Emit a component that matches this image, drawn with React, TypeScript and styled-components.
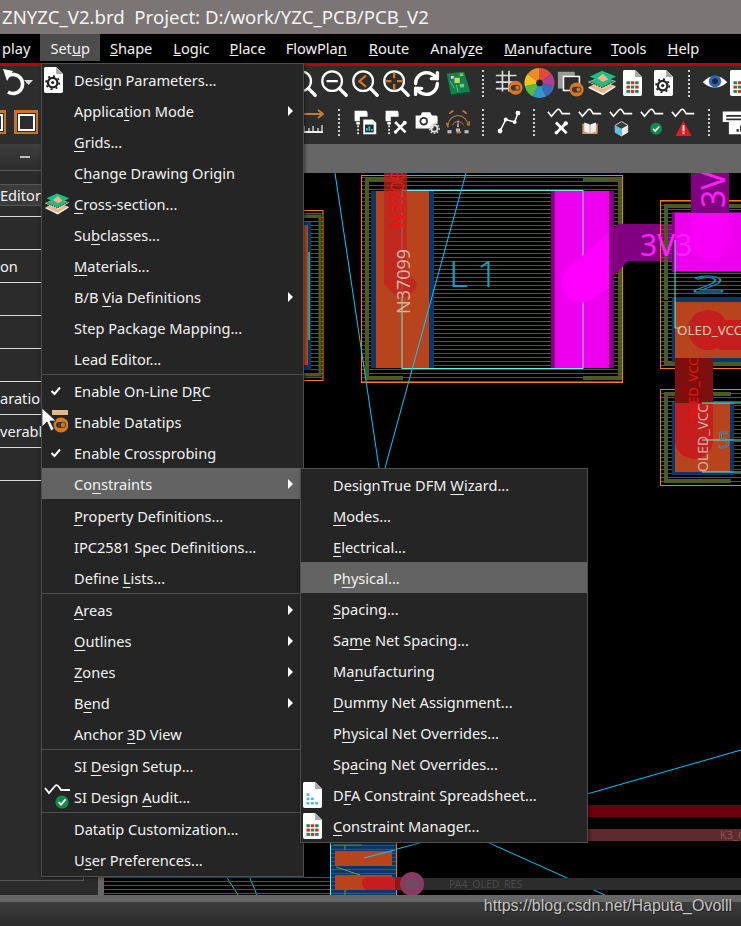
import React from 'react';
import styled, { createGlobalStyle } from 'styled-components';
import { RefreshCw } from 'lucide-react';

const GlobalStyle = createGlobalStyle`
  html, body {
    margin: 0;
    background: #000;
    overflow: hidden;
  }
  * {
    box-sizing: border-box;
  }
`;

const FONT = `"Noto Sans", "Open Sans", "Liberation Sans", sans-serif`;

const Page = styled.div`
  position: relative;
  width: 741px;
  height: 926px;
  display: flex;
  flex-direction: column;
  overflow: hidden;
  font-family: ${FONT};
  color: #f2f2f2;
`;

const TitleBar = styled.div`
  height: 34px;
  flex: none;
  background: #7b7575;
  padding-left: 2px;
  font-size: 18.6px;
  line-height: 34px;
  white-space: pre;
  color: #f4f4f4;
`;

const MenuBar = styled.div`
  height: 32px;
  flex: none;
  background: #000;
  border-bottom: 3px solid #c00000;
  display: flex;
  align-items: flex-start;
`;

const MenuTitle = styled.div<{ $left: number; $active?: boolean }>`
  margin-left: ${(p) => p.$left}px;
  padding: 0 10px;
  height: 27px;
  line-height: 28px;
  font-size: 14.6px;
  white-space: nowrap;
  background: ${(p) => (p.$active ? '#4d4d4d' : 'transparent')};
`;

const Toolbar = styled.div`
  height: 78px;
  flex: none;
  background: #2d2d2d;
  display: flex;
  flex-direction: column;
`;

const ToolRow = styled.div<{ $height: number }>`
  height: ${(p) => p.$height}px;
  display: flex;
  align-items: center;
`;

const Spacer = styled.div<{ $w: number }>`
  flex: 0 0 ${(p) => p.$w}px;
`;

const ToolSlot = styled.div<{ $w?: number }>`
  flex: 0 0 ${(p) => p.$w ?? 31}px;
  min-width: 0;
  height: 32px;
  display: flex;
  align-items: center;
  justify-content: center;
`;

const ToolSep = styled.div`
  flex: 0 0 20px;
  height: 27px;
  display: flex;
  justify-content: center;
  &::after {
    content: '';
    border-left: 2px dotted #cfcfcf;
  }
`;

const ClippedSquare = styled.div<{ $shift: number }>`
  margin-left: ${(p) => p.$shift}px;
  width: 24px;
  height: 24px;
  flex: none;
  border: 3px solid #c8752a;
  display: flex;
  align-items: center;
  justify-content: center;
  &::after {
    content: '';
    width: 13px;
    height: 13px;
    border: 2px solid #fff;
    box-shadow: 0 0 0 1px #2d2d2d;
  }
`;

const Workspace = styled.div`
  flex: 1;
  display: flex;
  min-height: 0;
`;

const LeftPanel = styled.div`
  flex: 0 0 98px;
  background: #2b2b2b;
  display: flex;
  flex-direction: column;
`;

const PanelHeader = styled.div`
  height: 27px;
  flex: none;
  background: linear-gradient(#3e3e3e, #2c2c2c);
  border-bottom: 1px solid #5a5a5a;
  padding-left: 20px;
  display: flex;
  align-items: center;
  &::after {
    content: '';
    width: 10px;
    height: 2px;
    background: #bcbcbc;
  }
`;

const PanelBox = styled.div`
  flex: 1;
  margin: 13px 14px 14px 0;
  border-right: 1px solid #555;
  border-bottom: 1px solid #555;
  display: flex;
  flex-direction: column;
`;

const EditorBar = styled.div`
  height: 22px;
  flex: none;
  background: #3b3b3b;
  border-top: 1px solid #555;
  border-bottom: 1px solid #555;
  font-size: 14.6px;
  line-height: 20px;
  margin-bottom: 10px;
`;

const PanelList = styled.div`
  border-top: 1px solid #d8d8d8;
`;

const PanelRow = styled.div`
  height: 33px;
  border-bottom: 1px solid #d8d8d8;
  font-size: 14.6px;
  line-height: 32px;
  white-space: nowrap;
  overflow: hidden;
`;

const GapStrip = styled.div`
  flex: 0 0 6px;
  background: #666;
`;

const CanvasColumn = styled.div`
  flex: 1;
  min-width: 0;
  display: flex;
  flex-direction: column;
`;

const TabStrip = styled.div`
  height: 29px;
  flex: none;
  background: #666;
`;

const PcbCanvas = styled.svg`
  flex: 1;
  display: block;
  width: 100%;
  height: 722px;
  background: #000;
  font-family: ${FONT};
`;

const GreyBar = styled.div`
  height: 7px;
  flex: none;
  background: #666;
`;

const StatusBar = styled.div`
  height: 24px;
  flex: none;
  background: linear-gradient(#3d3d3d, #2b2b2b);
  display: flex;
  justify-content: flex-end;
  padding-right: 9px;
`;

const Watermark = styled.div`
  font-family: 'Liberation Sans', Arial, sans-serif;
  font-size: 16px;
  line-height: 8px;
  color: #c4c4c4;
  text-shadow: 1px 1px 1px #222;
  white-space: nowrap;
`;

const Menu = styled.div<{ $top: number; $left: number; $width: number; $height: number }>`
  position: absolute;
  top: ${(p) => p.$top}px;
  left: ${(p) => p.$left}px;
  width: ${(p) => p.$width}px;
  height: ${(p) => p.$height}px;
  background: #252525;
  border: 1px solid #4e4e4e;
  box-shadow: 1px 1px 3px rgba(0, 0, 0, 0.5);
`;

const Row = styled.div<{ $hover?: boolean; $gap?: boolean }>`
  height: 31px;
  display: flex;
  align-items: center;
  font-size: 14.6px;
  white-space: nowrap;
  background: ${(p) => (p.$hover ? '#636363' : 'transparent')};
  margin-bottom: ${(p) => (p.$gap ? 1 : 0)}px;
  u {
    text-underline-offset: 3px;
    text-decoration-thickness: 1px;
  }
`;

const RowIcon = styled.div`
  flex: 0 0 32px;
  min-width: 0;
  height: 31px;
  padding-left: 2px;
  display: flex;
  align-items: center;
`;

const RowLabel = styled.span`
  flex: 1;
`;

const RowArrow = styled.span`
  width: 0;
  height: 0;
  margin-right: 10px;
  border-left: 5px solid #fff;
  border-top: 5px solid transparent;
  border-bottom: 5px solid transparent;
`;

const MenuSep = styled.div`
  height: 1px;
  background: #4e4e4e;
`;

const Cursor = styled.svg`
  position: absolute;
  left: 41px;
  top: 407px;
`;

// "&x" marks the underlined mnemonic letter
const label = (text: string) => {
  const at = text.indexOf('&');
  if (at < 0) return text;
  return (
    <>
      {text.slice(0, at)}
      <u>{text[at + 1]}</u>
      {text.slice(at + 2)}
    </>
  );
};

const ZoomIcon = ({ children }: { children?: React.ReactNode }) => (
  <svg width="30" height="30" viewBox="0 0 32 32" fill="none">
    <circle cx="14" cy="14" r="10.5" stroke="#fff" strokeWidth="2.4" />
    <path d="M22 22 L29 29" stroke="#fff" strokeWidth="3.6" strokeLinecap="round" />
    {children}
  </svg>
);

const BoardIcon = () => (
  <svg width="28" height="28" viewBox="0 0 32 32">
    <path d="M3 5 L23 3 L30 26 L8 29 Z" fill="#12804f" />
    <path d="M8 29 L30 26 L30 28 L8 31 Z" fill="#0a4c30" />
    <rect x="12" y="10" width="6" height="6" fill="#c8d85a" />
    <rect x="18" y="5" width="4" height="3" fill="#e0a050" />
    <rect x="8" y="8" width="3" height="3" fill="#d8e0e0" />
    <rect x="18" y="17" width="5" height="4" fill="#7fc97f" />
    <path d="M7 14 L12 22 M14 18 L16 26" stroke="#5fd08a" strokeWidth="1" />
  </svg>
);

const OrangeToggle = ({ cx, cy }: { cx: number; cy: number }) => (
  <g>
    <circle cx={cx} cy={cy} r="7.5" fill="#d8771f" />
    <rect x={cx - 5} y={cy - 3} width="10" height="6" rx="3" fill="#3a3a3a" />
    <circle cx={cx + 2} cy={cy} r="2.2" fill="#d8771f" />
  </g>
);

const GridToggleIcon = () => (
  <svg width="30" height="30" viewBox="0 0 32 32">
    <path d="M9 3 V25 M16 3 V25 M2 8 H24 M2 15 H24 M2 22 H16" stroke="#ddd" strokeWidth="1.8" />
    <OrangeToggle cx={23} cy={21} />
  </svg>
);

const COLOR_WHEEL = ['#e8483a', '#b0408e', '#3f68b8', '#2a9ad0', '#56b848', '#f2c21e', '#f08a24'];

const ColorWheel = () => (
  <svg width="32" height="32" viewBox="0 0 32 32">
    {COLOR_WHEEL.map((c, i) => (
      <circle
        key={c}
        cx="16"
        cy="16"
        r="9.5"
        fill="none"
        stroke={c}
        strokeWidth="12"
        pathLength={7}
        strokeDasharray="1 6"
        strokeDashoffset={-i}
        transform="rotate(-90 16 16)"
      />
    ))}
    <circle cx="16" cy="16" r="3" fill="#222" />
  </svg>
);

const WindowToggleIcon = () => (
  <svg width="30" height="30" viewBox="0 0 32 32">
    <rect x="2" y="4" width="18" height="18" fill="#9a9a9a" />
    <rect x="8" y="9" width="17" height="15" fill="#2d2d2d" stroke="#fff" strokeWidth="1.6" />
    <OrangeToggle cx={22} cy={23} />
  </svg>
);

const StackIcon = ({ size = 30 }: { size?: number }) => (
  <svg width={size} height={size} viewBox="0 0 32 32">
    <path d="M1 21 L15 14 L31 20 L17 29 Z" fill="#fff" />
    <path d="M2 20 L15 14 L30 19 L17 27 Z" fill="#eeb48a" />
    <path d="M1 15 L15 9 L31 14 L17 22 Z" fill="#fff" />
    <path d="M2 15 L15 9 L30 14 L17 21 Z" fill="#38b27a" />
    <path d="M3 9 L16 3 L31 9 L18 16 Z" fill="#12c185" />
    <path d="M11 11 L17 6 L23 12 L17 15 Z" fill="#eeb48a" />
    <path d="M4 15 L16 21 L29 14" stroke="#0b5c3a" strokeWidth="1.2" strokeDasharray="2 1" fill="none" />
  </svg>
);

const SHEET_RED = '#d8262c';
const SHEET_GREEN = '#1c8a4a';

const SheetBase = ({ children, height = 26 }: { children?: React.ReactNode; height?: number }) => (
  <svg width={(height * 22) / 30} height={height} viewBox="0 0 22 30">
    <path d="M1.5 0 H14 L22 8 V28 Q22 30 20 30 H2 Q0 30 0 28 V2 Q0 0 1.5 0 Z" fill="#fff" />
    <path d="M14 0 L22 8 H14 Z" fill="#a8a8a8" />
    {children}
  </svg>
);

const GridSheet = ({ height }: { height?: number }) => (
  <SheetBase height={height}>
    {[13, 18, 23].map((y, r) =>
      [4, 9, 14].map((x, c) => (
        <rect
          key={`${r}-${c}`}
          x={x}
          y={y}
          width="4"
          height="3.4"
          fill={(r + c) % 2 === 0 ? SHEET_GREEN : SHEET_RED}
        />
      )),
    )}
  </SheetBase>
);

const DfaSheet = ({ height }: { height?: number }) => (
  <SheetBase height={height}>
    <rect x="4" y="13" width="3.4" height="3" fill="#4cc0c8" />
    <rect x="4" y="18" width="3.4" height="3" fill="#4cc0c8" />
    <rect x="9" y="18" width="3.4" height="3" fill="#4cc0c8" />
    <rect x="4" y="23" width="3.4" height="3" fill="#4cc0c8" />
    <rect x="9" y="23" width="3.4" height="3" fill="#4cc0c8" />
    <rect x="14" y="23" width="3.4" height="3" fill="#4cc0c8" />
  </SheetBase>
);

const GearSheet = ({ height }: { height?: number }) => (
  <SheetBase height={height}>
    <circle cx="10" cy="18" r="5.5" fill="none" stroke="#222" strokeWidth="2.6" />
    <circle
      cx="10"
      cy="18"
      r="7.6"
      fill="none"
      stroke="#222"
      strokeWidth="2"
      strokeDasharray="2.4 3.6"
    />
    <circle cx="10" cy="18" r="1.8" fill="#222" />
  </SheetBase>
);

const EyeIcon = () => (
  <svg width="28" height="28" viewBox="0 0 32 32">
    <path d="M2 15 Q16 1 30 15 Q16 27 2 15 Z" fill="#fff" />
    <circle cx="16" cy="14" r="7" fill="#2c64b4" />
    <circle cx="16" cy="14" r="3.4" fill="#1b2a44" />
  </svg>
);

const MeasureIcon = () => (
  <svg width="24" height="30" viewBox="0 0 24 30">
    <path d="M1 7 H23 M18 3 L23 7 L18 11" stroke="#c87a30" strokeWidth="2" fill="none" />
    <path d="M1 25 H23" stroke="#eee" strokeWidth="2" />
    <path d="M4 19 V24 M9 21 V24 M13 19 V24 M18 21 V24 M22 18 V24" stroke="#ddd" strokeWidth="1.3" />
  </svg>
);

const DrillShape = () => (
  <g fill="#fff">
    <path d="M3 2 H16 Q18 2 18 6 V9 H9 V14 H3 Z" />
    <rect x="5" y="15" width="4" height="3" />
    <rect x="6" y="19" width="2" height="2" />
    <rect x="6" y="23" width="2" height="2" />
    <rect x="6" y="27" width="2" height="2" />
  </g>
);

const WrenchShape = ({ x, y, scale = 1 }: { x: number; y: number; scale?: number }) => (
  <g transform={`translate(${x} ${y}) scale(${scale})`}>
    <path d="M1 1 L13 13" stroke="#fff" strokeWidth="3" />
    <path d="M13 1 L1 13" stroke="#fff" strokeWidth="3" />
    <circle cx="12" cy="2" r="2.4" fill="#fff" />
    <circle cx="1.5" cy="12.5" r="2" fill="#fff" />
  </g>
);

const DrillDocIcon = () => (
  <svg width="26" height="26" viewBox="0 0 30 30">
    <DrillShape />
    <path d="M13 12 H24 L28 16 V29 H13 Z" fill="#fff" />
    <rect x="15" y="18" width="10" height="9" fill="#1f2f3a" />
    <path d="M17 25 V22 M20 25 V20 M23 25 V23" stroke="#4cc0c8" strokeWidth="2" />
  </svg>
);

const DrillWrenchIcon = () => (
  <svg width="26" height="26" viewBox="0 0 30 30">
    <DrillShape />
    <WrenchShape x={13} y={14} />
  </svg>
);

const CameraIcon = () => (
  <svg width="26" height="26" viewBox="0 0 32 32">
    <path d="M2 8 H8 L10 4 H20 L22 8 H27 Q29 8 29 10 V18 H24 V24 H2 Z" fill="#fff" />
    <circle cx="12" cy="15" r="5.2" fill="#2d2d2d" />
    <circle cx="12" cy="15" r="3" fill="#fff" />
    <circle cx="25" cy="24" r="4" fill="none" stroke="#ddd" strokeWidth="2.4" />
    <circle cx="25" cy="24" r="6" fill="none" stroke="#ddd" strokeWidth="1.6" strokeDasharray="2 2" />
  </svg>
);

const GearTuneIcon = () => (
  <svg width="26" height="26" viewBox="0 0 32 32" fill="none">
    <path d="M4 20 A12 12 0 1 1 28 20" stroke="#c07a34" strokeWidth="1.4" />
    <circle cx="16" cy="15" r="14" stroke="#c07a34" strokeWidth="2" strokeDasharray="3 6" pathLength={44} />
    <path d="M9 20 A7.5 7.5 0 0 1 23 20" stroke="#c07a34" strokeWidth="1.2" />
    <path d="M16 12 L15 22 H17 Z" fill="#ddd" />
    <rect x="3" y="26" width="5" height="4" fill="#bbb" />
    <rect x="13.5" y="24" width="5" height="4" fill="#bbb" />
    <rect x="24" y="26" width="5" height="4" fill="#bbb" />
  </svg>
);

const RouteIcon = () => (
  <svg width="26" height="26" viewBox="0 0 32 32" fill="none">
    <path d="M5 27 L12 13 L23 16 L27 5" stroke="#fff" strokeWidth="1.8" />
    <circle cx="5" cy="27" r="3" fill="#fff" />
    <circle cx="12" cy="13" r="2.4" fill="#fff" />
    <circle cx="23" cy="16" r="2.4" fill="#fff" />
    <circle cx="27" cy="5" r="3" fill="#fff" />
  </svg>
);

const WaveLine = () => (
  <path d="M1 4 L5 9 L11 2 Q13 0 15 3 L17 6 H26" stroke="#fff" strokeWidth="1.8" fill="none" />
);

const CheckBadge = ({ x, y }: { x: number; y: number }) => (
  <g>
    <circle cx={x} cy={y} r="6.6" fill="#128a4a" />
    <path
      d={`M${x - 3.4} ${y} L${x - 1} ${y + 2.6} L${x + 3.6} ${y - 2.6}`}
      stroke="#fff"
      strokeWidth="1.8"
      fill="none"
    />
  </g>
);

const WaveIcon = ({ kind }: { kind: string }) => (
  <svg width="25" height="29" viewBox="0 0 28 32">
    <WaveLine />
    {kind === 'wrench' && <WrenchShape x={9} y={15} />}
    {kind === 'book' && (
      <g>
        <path d="M5 17 L13.5 19 L22 17 V29 H5 Z" fill="#caa06a" />
        <path d="M7 16 L13 18 V28 L7 26 Z M20 16 L14 18 V28 L20 26 Z" fill="#f0f0f0" />
      </g>
    )}
    {kind === 'cube' && (
      <g>
        <path d="M14 15 L21 19 V27 L14 31 L7 27 V19 Z" fill="#3a3a3a" stroke="#ddd" strokeWidth="1" />
        <path d="M14 23 L21 19 V27 L14 31 Z" fill="#eee" />
        <path d="M14 23 L7 19 V27 L14 31 Z" fill="#5cc0ee" />
      </g>
    )}
    {kind === 'check' && <CheckBadge x={18} y={23} />}
    {kind === 'warn' && (
      <g>
        <path d="M14 14 L23 31 H5 Z" fill="#e01b24" />
        <rect x="13" y="19" width="2" height="7" fill="#fff" />
        <rect x="13" y="27" width="2" height="2" fill="#fff" />
      </g>
    )}
  </svg>
);

const PrinterIcon = () => (
  <svg width="30" height="28" viewBox="0 0 30 32">
    <path d="M1 4 H30 V8 H5 V10 H30 V12 H5 V14 H30 V30 H8 V16 H1 Z" fill="#fff" />
    <path d="M18 27 V24 M22 27 V20 M26 27 V17" stroke="#2d2d2d" strokeWidth="2.4" />
  </svg>
);

const UndoIcon = () => (
  <svg width="34" height="32" viewBox="0 0 34 32">
    <path d="M8 9 A9.5 9.5 0 1 1 8 25" stroke="#fff" strokeWidth="3.6" fill="none" />
    <path d="M3 2 L13 4 L7 14 Z" fill="#fff" />
    <path d="M24 13 H33 L28.5 18 Z" fill="#ddd" />
  </svg>
);

const CheckMark = () => (
  <svg width="24" height="10" viewBox="0 0 24 10">
    <path d="M7.5 5 L10.5 8 L16 1.5" stroke="#fff" strokeWidth="2" fill="none" />
  </svg>
);

const DatatipIcon = () => (
  <svg width="24" height="30" viewBox="0 0 24 30">
    <rect x="8" y="3" width="16" height="5" fill="#e0bb84" />
    <OrangeToggle cx={17} cy={18} />
  </svg>
);

const SiAuditIcon = () => (
  <svg width="26" height="26" viewBox="0 0 26 26">
    <WaveLine />
    <CheckBadge x={18} y={18} />
  </svg>
);

type Item = {
  text: string;
  icon?: React.ReactNode;
  arrow?: boolean;
  hover?: boolean;
  gap?: boolean;
};

const SETUP_GROUPS: Item[][] = [
  [
    { text: 'Desi&gn Parameters...', icon: <GearSheet height={26} /> },
    { text: 'Applica&tion Mode', arrow: true },
    { text: '&Grids...' },
    { text: 'C&hange Drawing Origin' },
    { text: '&Cross-section...', icon: <StackIcon size={26} /> },
    { text: 'Su&bclasses...' },
    { text: '&Materials...' },
    { text: 'B/B &Via Definitions', arrow: true },
    { text: 'Step Package Mapping...' },
    { text: 'Lead Editor...' },
  ],
  [
    { text: 'Enable On-Line D&RC', icon: <CheckMark /> },
    { text: 'Enable Datatips', icon: <DatatipIcon /> },
    { text: 'Enable Crossprobing', icon: <CheckMark /> },
    { text: 'Co&nstraints', arrow: true, hover: true, gap: true },
    { text: '&Property Definitions...' },
    { text: 'IPC2581 Spec Definitions...' },
    { text: 'Define &Lists...' },
  ],
  [
    { text: '&Areas', arrow: true },
    { text: '&Outlines', arrow: true },
    { text: '&Zones', arrow: true },
    { text: 'B&end', arrow: true },
    { text: 'Anchor &3D View' },
  ],
  [
    { text: 'SI &Design Setup...' },
    { text: 'SI Design &Audit...', icon: <SiAuditIcon /> },
  ],
  [{ text: 'Datatip Customization...' }, { text: 'U&ser Preferences...' }],
];

const CONSTRAINT_ITEMS: Item[] = [
  { text: 'DesignTrue DFM &Wizard...' },
  { text: '&Modes...' },
  { text: '&Electrical...' },
  { text: 'P&hysical...', hover: true },
  { text: '&Spacing...' },
  { text: 'Sa&me Net Spacing...' },
  { text: 'Ma&nufacturing' },
  { text: '&Dummy Net Assignment...' },
  { text: 'P&hysical Net Overrides...' },
  { text: 'Sp&acing Net Overrides...' },
  { text: 'D&FA Constraint Spreadsheet...', icon: <DfaSheet height={26} /> },
  { text: '&Constraint Manager...', icon: <GridSheet height={26} /> },
];

const MenuRow = ({ item }: { item: Item }) => (
  <Row $hover={item.hover} $gap={item.gap}>
    <RowIcon>{item.icon}</RowIcon>
    <RowLabel>{label(item.text)}</RowLabel>
    {item.arrow && <RowArrow />}
  </Row>
);

const MENU_TITLES = [
  { text: 'play', left: -8 },
  { text: 'Set&up', left: 0, active: true },
  { text: '&Shape', left: 0 },
  { text: '&Logic', left: 1 },
  { text: '&Place', left: 0 },
  { text: 'FlowPla&n', left: 0 },
  { text: '&Route', left: 2 },
  { text: 'Analy&ze', left: 1 },
  { text: '&Manufacture', left: 1 },
  { text: '&Tools', left: -1 },
  { text: '&Help', left: 1 },
];

const PANEL_ROWS = ['', 'on', '', '', '', 'aration', 'verable', ''];

const AIR = '#00c8ff';
const TEAL = '#66f0d8';
const OLIVE = '#4d5a1e';
const ORANGE = '#ff7a00';
const PAD = '#b8441e';
const NAVY = '#0a3766';
const MAGENTA = '#ee00ee';
const BRIGHT = '#f800f8';
const PURPLE = '#800080';
const RED = '#c41e1e';

const Pcb = () => (
  <PcbCanvas viewBox="104 173 637 722">
    <defs>
      <pattern id="hatch" width="4" height="4" patternUnits="userSpaceOnUse">
        <rect x="0" y="1" width="4" height="1" fill="#7a4a10" />
      </pattern>
      <pattern id="blueHatch" width="4" height="4" patternUnits="userSpaceOnUse">
        <rect width="4" height="4" fill={NAVY} />
        <rect x="0" y="1" width="4" height="1" fill="#2c5a8a" />
      </pattern>
    </defs>

    {/* left component, mostly behind the menu */}
    <rect x="270" y="210" width="53" height="171" fill="url(#hatch)" />
    <rect x="270" y="210.5" width="53" height="170" fill="none" stroke={ORANGE} />
    <path d="M270 216 H320 V375 H270" fill="none" stroke={OLIVE} strokeWidth="3" />
    <rect x="280" y="222" width="31" height="148" fill={NAVY} />
    <rect x="280" y="225" width="28" height="140" fill={PAD} />
    <path d="M309 252 V340" stroke={TEAL} strokeWidth="1" />

    {/* L1 */}
    <rect x="362" y="175" width="261" height="207" fill="url(#hatch)" />
    <rect x="361.5" y="175.5" width="261" height="207" fill="none" stroke={ORANGE} />
    <path d="M403 180 H367 V378 H403 M583 180 H620 V378 H583" fill="none" stroke={OLIVE} strokeWidth="4" />
    <rect x="371" y="191" width="63" height="177" fill={NAVY} />
    <rect x="376" y="191" width="53" height="177" fill={PAD} />
    <rect x="551" y="191" width="63" height="177" fill={PURPLE} />
    <rect x="555" y="191" width="54" height="177" fill={MAGENTA} />
    <rect x="402" y="190.5" width="181" height="178" fill="none" stroke={TEAL} strokeWidth="1" />

    <path
      d="M384 173 H407 V270 L417 284 A15 15 0 0 1 396 296 L384 284 Z"
      fill={RED}
      opacity="0.72"
    />
    <text transform="translate(404 228) rotate(-90)" fontSize="19" fill="#f01010" textAnchor="start">N3709</text>
    <text transform="translate(410 314) rotate(-90)" fontSize="18" fill="#d8b0a0">N37099</text>

    <text x="449" y="287" fontSize="37" fontWeight="300" fill="#1f9bb5" letterSpacing="9">L1</text>

    {/* 3V3 trace */}
    <path d="M566 278 L618 224 H741 V261 H628 L598 292 Z" fill={PURPLE} />
    <path d="M567 270 L609 232 V288 L596 296 A18 18 0 0 1 567 270 Z" fill="#ff00ff" />

    {/* right component top */}
    <rect x="660" y="200" width="90" height="169" fill="url(#hatch)" />
    <rect x="660.5" y="200.5" width="90" height="168" fill="none" stroke={ORANGE} />
    <path d="M760 206 H666 V300 M666 302 V364 H760" fill="none" stroke={OLIVE} strokeWidth="4" />
    <rect x="672" y="212" width="80" height="60" fill={PURPLE} />
    <rect x="675" y="213" width="70" height="58" fill={MAGENTA} />
    <rect x="691" y="173" width="38" height="50" fill={PURPLE} />
    <rect x="691" y="213" width="38" height="34" fill={BRIGHT} />
    <circle cx="711" cy="242" r="18" fill={BRIGHT} />
    <text x="640" y="256" fontSize="30" fill="#ff20ff">3V3</text>
    <text transform="translate(725 208) rotate(-90)" fontSize="32" fill="#ff20ff">3V</text>
    <rect x="672" y="297" width="80" height="65" fill={NAVY} />
    <rect x="675" y="302" width="70" height="56" fill={PAD} />
    <text x="692" y="292" fontSize="22" fill="none" stroke="#1f8fb0" strokeWidth="0.8" textLength="33" lengthAdjust="spacingAndGlyphs">2</text>
    <path d="M675 240 V328 H680" fill="none" stroke={TEAL} />
    <circle cx="708" cy="330" r="20" fill={RED} />
    <path d="M700 335 L720 350 L745 350 L745 320 L720 320 Z" fill={RED} />
    <text x="677" y="335" fontSize="13.4" fill="#e8c8b8">OLED_VCC</text>

    {/* right component bottom */}
    <rect x="660" y="389" width="90" height="97" fill="url(#hatch)" />
    <rect x="660.5" y="389.5" width="90" height="96" fill="none" stroke={ORANGE} />
    <path d="M731 394 H666 V481 H731" fill="none" stroke={OLIVE} strokeWidth="4" />
    <rect x="672" y="402" width="62" height="73" fill={NAVY} />
    <rect x="675" y="403" width="55" height="69" fill={PAD} />
    <rect x="675" y="358" width="38" height="85" fill="#7d0f0f" />
    <rect x="675" y="403" width="38" height="40" fill={RED} />
    <circle cx="694" cy="440" r="19" fill={RED} />
    <path d="M702 403 H741 M702 472 H741 M702 440 H741" stroke={TEAL} fill="none" />
    <text transform="translate(698 421) rotate(-90)" fontSize="13" fill="#f01010">OLED_VCC</text>
    <text transform="translate(708 472) rotate(-90)" fontSize="14" fill="#d8b0a0">OLED_VCC</text>
    <text x="718" y="448" fontSize="22" fill="none" stroke="#1f8fb0" strokeWidth="0.8">5</text>

    {/* ratsnest */}
    <g stroke={AIR} strokeWidth="1" fill="none">
      <path d="M335 173 L379 468" />
      <path d="M466 173 L385 468" />
      <path d="M587 794 L741 750" />
      <path d="M487 842 L605 895" />
      <path d="M364 858 L423 842" />
      <path d="M226 876 L238 895" />
      <path d="M249 876 L257 895" />
    </g>

    {/* lower traces */}
    <rect x="587" y="805" width="154" height="12" fill="#6a0009" />
    <rect x="587" y="829" width="154" height="12" fill="#5f2a2e" />
    <text x="720" y="839" fontSize="11" fill="#85575a">K3_O</text>
    <rect x="413" y="878" width="328" height="12" fill="#2c2c2c" />
    <text x="449" y="888" fontSize="10.5" fill="#4a4a4a">PA4_OLED_RES</text>

    <rect x="104" y="876" width="226" height="19" fill="url(#hatch)" />
    <rect x="330" y="842" width="67" height="53" fill="url(#blueHatch)" />
    <path d="M330.5 842 V895" stroke={TEAL} />
    <path d="M396.5 842 V895" stroke={ORANGE} />
    <rect x="335" y="851" width="57" height="15" fill={PAD} />
    <rect x="335" y="875" width="57" height="15" fill={PAD} />
    <path d="M334 845 H362 M345 845 V850 M336 867 L360 875 M345 890 V895" stroke="#7a9a30" fill="none" />
    <rect x="362" y="877" width="38" height="13" rx="6" fill={RED} />
    <rect x="395" y="877" width="10" height="13" fill="#8a1818" />
    <circle cx="412" cy="884" r="12" fill="#8a3a60" />
    <ellipse cx="412" cy="884" rx="7" ry="6" fill="#6f4a62" />
    <path d="M364 858 L395 850" stroke={AIR} />
  </PcbCanvas>
);

const App = () => (
  <Page>
    <GlobalStyle />
    <TitleBar>ZNYZC_V2.brd  Project: D:/work/YZC_PCB/PCB_V2</TitleBar>
    <MenuBar>
      {MENU_TITLES.map((m) => (
        <MenuTitle key={m.text} $left={m.left} $active={m.active}>
          {label(m.text)}
        </MenuTitle>
      ))}
    </MenuBar>
    <Toolbar>
      <ToolRow $height={34}>
        <ToolSlot $w={34}>
          <UndoIcon />
        </ToolSlot>
        <Spacer $w={253} />
        <ToolSlot><ZoomIcon /></ToolSlot>
        <ToolSlot>
          <ZoomIcon>
            <path d="M8 14 H20" stroke="#fff" strokeWidth="2.4" />
          </ZoomIcon>
        </ToolSlot>
        <ToolSlot>
          <ZoomIcon>
            <path d="M17 8 L10 14 L17 20" stroke="#d8771f" strokeWidth="2.4" fill="none" />
          </ZoomIcon>
        </ToolSlot>
        <ToolSlot>
          <ZoomIcon>
            <path d="M14 5 V11 M14 17 V23 M5 14 H11 M17 14 H23" stroke="#d8771f" strokeWidth="2.4" />
          </ZoomIcon>
        </ToolSlot>
        <ToolSlot>
          <RefreshCw size={29} color="#fff" strokeWidth={2.8} />
        </ToolSlot>
        <ToolSlot><BoardIcon /></ToolSlot>
        <ToolSep />
        <ToolSlot><GridToggleIcon /></ToolSlot>
        <ToolSlot><ColorWheel /></ToolSlot>
        <ToolSlot><WindowToggleIcon /></ToolSlot>
        <ToolSlot><StackIcon /></ToolSlot>
        <ToolSlot><GridSheet /></ToolSlot>
        <ToolSlot><GearSheet /></ToolSlot>
        <ToolSep />
        <ToolSlot><EyeIcon /></ToolSlot>
        <ToolSlot $w={20}><GridSheet /></ToolSlot>
      </ToolRow>
      <ToolRow $height={44}>
        <ClippedSquare $shift={-18} />
        <Spacer $w={8} />
        <ClippedSquare $shift={0} />
        <Spacer $w={256} />
        <ToolSlot $w={35}><MeasureIcon /></ToolSlot>
        <ToolSep />
        <ToolSlot><DrillDocIcon /></ToolSlot>
        <ToolSlot><DrillWrenchIcon /></ToolSlot>
        <ToolSlot><CameraIcon /></ToolSlot>
        <ToolSlot><GearTuneIcon /></ToolSlot>
        <ToolSep />
        <ToolSlot><RouteIcon /></ToolSlot>
        <ToolSep />
        <ToolSlot><WaveIcon kind="wrench" /></ToolSlot>
        <ToolSlot><WaveIcon kind="book" /></ToolSlot>
        <ToolSlot><WaveIcon kind="cube" /></ToolSlot>
        <ToolSlot><WaveIcon kind="check" /></ToolSlot>
        <ToolSlot><WaveIcon kind="warn" /></ToolSlot>
        <ToolSep />
        <ToolSlot><PrinterIcon /></ToolSlot>
      </ToolRow>
    </Toolbar>
    <Workspace>
      <LeftPanel>
        <PanelHeader />
        <PanelBox>
          <EditorBar>Editor</EditorBar>
          <PanelList>
            {PANEL_ROWS.map((t, i) => (
              <PanelRow key={i}>{t}</PanelRow>
            ))}
          </PanelList>
        </PanelBox>
      </LeftPanel>
      <GapStrip />
      <CanvasColumn>
        <TabStrip />
        <Pcb />
      </CanvasColumn>
    </Workspace>
    <GreyBar />
    <StatusBar>
      <Watermark>https://blog.csdn.net/Haputa_Ovolll</Watermark>
    </StatusBar>

    <Menu $top={63} $left={41} $width={263} $height={814}>
      {SETUP_GROUPS.map((group, g) => (
        <React.Fragment key={g}>
          {g > 0 && <MenuSep />}
          {group.map((item) => (
            <MenuRow key={item.text} item={item} />
          ))}
        </React.Fragment>
      ))}
    </Menu>
    <Menu $top={468} $left={300} $width={288} $height={375}>
      {CONSTRAINT_ITEMS.map((item) => (
        <MenuRow key={item.text} item={item} />
      ))}
    </Menu>
    <Cursor width="16" height="26" viewBox="0 0 16 26">
      <path d="M1 1 L1 20 L6 15 L10 24 L13 22 L9 14 L15 14 Z" fill="#fff" stroke="#222" strokeWidth="0.8" />
    </Cursor>
  </Page>
);

export default App;
